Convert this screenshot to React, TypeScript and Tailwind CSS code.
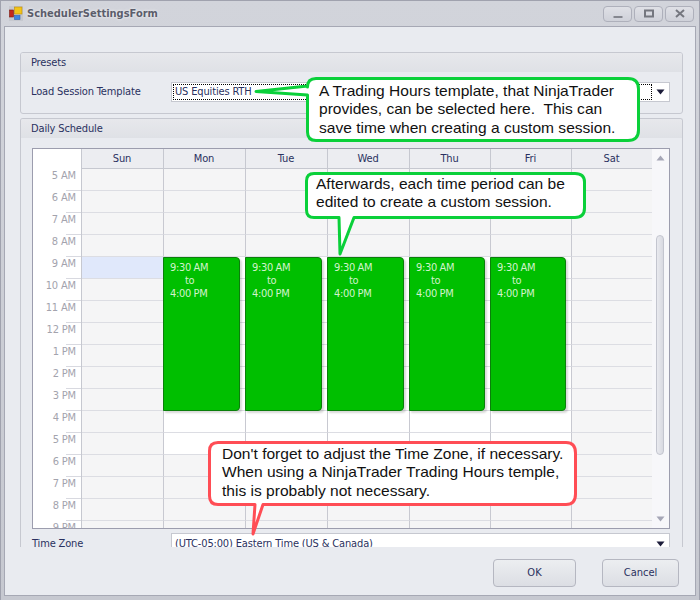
import React from "react";

const ui = "font-['DejaVu_Sans_Condensed','DejaVu_Sans',sans-serif] tracking-[-0.15px]";
const hours = ["5 AM","6 AM","7 AM","8 AM","9 AM","10 AM","11 AM","12 PM","1 PM","2 PM","3 PM","4 PM","5 PM","6 PM","7 PM","8 PM","9 PM"];
const days = [
  { n: "Sun", w: "w-[82px]" },
  { n: "Mon", w: "w-[82px]" },
  { n: "Tue", w: "w-[82px]" },
  { n: "Wed", w: "w-[82px]" },
  { n: "Thu", w: "w-[81px]" },
  { n: "Fri", w: "w-[81px]" },
  { n: "Sat", w: "w-[80px]" },
];
const events = [
  "left-[130px] w-[77px]",
  "left-[212px] w-[77px]",
  "left-[294px] w-[77px]",
  "left-[376px] w-[76px]",
  "left-[457px] w-[76px]",
];

function Arrow({ up = false, c = "#1c1c3a" }: { up?: boolean; c?: string }) {
  return (
    <svg width="9" height="6" viewBox="0 0 9 6" className={up ? "rotate-180" : ""}>
      <path d="M0.5 0.5H8.5L4.5 5.5Z" fill={c} />
    </svg>
  );
}

function Group({ title, h, children }: { title: string; h: string; children: React.ReactNode }) {
  return (
    <section className={`${h} rounded-t-[3px] border-x border-t border-[#c6c8d0] overflow-hidden`}>
      <div className="h-[19px] pl-[10px] pt-[1px] flex items-center bg-gradient-to-b from-[#e7e8ec] to-[#dfe1e6] text-[#2a3160] text-[11px]">{title}</div>
      {children}
    </section>
  );
}

function Calendar() {
  return (
    <div className="ml-[11px] mt-[10px] w-[638px] h-[381px] border border-[#9c9dae] bg-white flex overflow-hidden">
      <div className="relative w-[619px] h-[379px] overflow-hidden">
        <div className="flex h-[20px]">
          <div className="w-[49px] border-r border-[#c6c8d0]" />
          {days.map((d) => (
            <div key={d.n} className={`${d.w} border-r border-b border-[#c6c8d0] bg-[#ecedf1] text-[#2a3160] text-[11px] pt-[1px] pr-[1px] flex items-center justify-center last:border-r-0`}>
              {d.n}
            </div>
          ))}
        </div>
        {hours.map((h, r) => (
          <div key={h} className="flex h-[22px]">
            <div className="relative w-[49px] border-r border-[#c6c8d0] text-right pr-[5px] text-[#a3a3ad] text-[11px] leading-[13px]">
              {h}
              <span className="absolute left-[33px] right-0 bottom-0 h-px bg-[#d8d9e0]" />
            </div>
            {days.map((d, i) => {
              const work = i >= 1 && i <= 5 && r >= 4 && r <= 12;
              const sel = i === 0 && r === 4;
              return (
                <div
                  key={d.n}
                  className={`${d.w} border-r border-b border-b-[#dcdde3] border-r-[#c8c9d1] last:border-r-0 ${sel ? "bg-[#e0e8fb]" : work ? "bg-white" : "bg-[#f5f5f6]"}`}
                />
              );
            })}
          </div>
        ))}
        {events.map((e) => (
          <div key={e} className={`absolute top-[108px] h-[154px] ${e} bg-[#00bf00] border border-[#0b7f0b] rounded-r-[4px] shadow-[2px_2px_2px_rgba(0,0,0,0.15)] text-[#d2f2cc] text-[11px] tracking-[-0.35px] leading-[13px] pl-[6px] pt-[3px]`}>
            <div>9:30 AM</div>
            <div className="pl-[15px]">to</div>
            <div>4:00 PM</div>
          </div>
        ))}
      </div>
      <div className="relative w-[17px] h-[379px] bg-[#f7f7fa] flex flex-col items-center justify-between py-[6px]">
        <Arrow up c="#a5a6b6" />
        <div className="absolute left-[4px] top-[86px] w-[8px] h-[220px] rounded-full border border-[#c3c5cf] bg-gradient-to-r from-[#e9eaef] to-[#d8d9e1]" />
        <Arrow c="#a5a6b6" />
      </div>
    </div>
  );
}

function Callout({ pos, stroke, path, text, children }: { pos: string; stroke: string; path: string; text: string; children: React.ReactNode }) {
  return (
    <div className={`absolute ${pos}`}>
      <svg className="absolute inset-0 w-full h-full overflow-visible" fill="none">
        <path d={path} fill="#fff" stroke={stroke} strokeWidth="3" strokeLinejoin="round" />
      </svg>
      <div className={`relative font-['Liberation_Sans',Arial,sans-serif] tracking-normal text-[#111] text-[15.55px] leading-[18.3px] whitespace-pre ${text}`}>{children}</div>
    </div>
  );
}

function WinBtn({ children }: { children: React.ReactNode }) {
  return (
    <div className="w-[29px] h-[16px] rounded-[4px] border border-[#aeb0bb] bg-gradient-to-b from-[#dfe0e6] to-[#cfd1d9] flex items-center justify-center">
      {children}
    </div>
  );
}

export default function App() {
  return (
    <div className={`relative w-[700px] h-[600px] overflow-hidden flex flex-col bg-gradient-to-b from-[#d2d4db] to-[#c6c8d0] border-x border-t border-[#a0a2ae] ${ui}`}>
      <header className="h-[25px] flex items-center pl-[8px] pr-[5px] shrink-0">
        <svg width="14" height="15" viewBox="0 0 14 15" className="shrink-0">
          <rect x="0" y="0" width="14" height="15" fill="#c6c8cf" />
          <rect x="0.5" y="4" width="4" height="7" fill="#c4281c" stroke="#7a1c14" strokeWidth="0.6" />
          <rect x="5.5" y="1" width="7.5" height="7" fill="#f2c418" stroke="#b98a10" strokeWidth="0.6" />
          <rect x="5.5" y="9.5" width="5.5" height="4" fill="#3f86e0" stroke="#2c62b0" strokeWidth="0.6" />
        </svg>
        <div className="ml-[4px] pt-[1px] font-bold text-[11px] tracking-normal text-[#5b5d6b] [text-shadow:0_0_3px_rgba(255,255,255,0.9)]">SchedulerSettingsForm</div>
        <div className="ml-auto flex gap-[2px]">
          <WinBtn>
            <svg width="10" height="10" viewBox="0 0 10 10"><rect x="0.5" y="7" width="9" height="2" fill="#85878f" /></svg>
          </WinBtn>
          <WinBtn>
            <svg width="10" height="10" viewBox="0 0 10 10"><rect x="1" y="1.5" width="8" height="6" fill="none" stroke="#75777f" strokeWidth="2" /></svg>
          </WinBtn>
          <WinBtn>
            <svg width="10" height="10" viewBox="0 0 10 10"><path d="M1 1L9 8M9 1L1 8" stroke="#75777f" strokeWidth="2" /></svg>
          </WinBtn>
        </div>
      </header>

      <main className="ml-[3px] mr-[3px] mb-[4px] flex-1 border border-[#a6a8b4] bg-[#e9ebf0] pl-[15px] pr-[12px] pt-[25px]">
        <Group title="Presets" h="h-[62px] border-b rounded-b-[3px]">
          <div className="mt-[10px] pl-[10px] flex items-center">
            <div className="w-[140px] pt-[1px] text-[#2a3160] text-[11px]">Load Session Template</div>
            <div className="w-[499px] h-[20px] bg-white border border-[#c6c8d0] flex items-center pl-[1px]">
              <div className="w-[479px] h-[16px] border border-dotted border-black flex items-center pl-[1px] pt-[1px] text-[#2a3160] text-[11px]">US Equities RTH</div>
              <div className="flex-1 flex justify-center"><Arrow /></div>
            </div>
          </div>
        </Group>
        <div className="h-[4px]" />
        <Group title="Daily Schedule" h="h-[429px]">
          <Calendar />
          <div className="mt-[4px] pl-[11px] flex items-start">
            <div className="w-[139px] text-[#2a3160] text-[11px] pt-[3px]">Time Zone</div>
            <div className="w-[499px] h-[20px] bg-white border border-[#c6c8d0] flex items-center pl-[3px] pt-[2px]">
              <div className="flex-1 text-[#2a3160] text-[11px]">(UTC-05:00) Eastern Time (US &amp; Canada)</div>
              <div className="w-[17px] flex justify-center"><Arrow /></div>
            </div>
          </div>
        </Group>
        <div className="mt-[12px] flex justify-end gap-[26px] pr-[4px] text-[#2a3160] text-[11px] tracking-normal">
          <button className="w-[83px] h-[28px] rounded-[4px] border border-[#b5b7c1] bg-gradient-to-b from-[#eceef1] to-[#dcdee4]">OK</button>
          <button className="w-[77px] h-[28px] rounded-[4px] border border-[#b5b7c1] bg-gradient-to-b from-[#eceef1] to-[#dcdee4]">Cancel</button>
        </div>
      </main>

      <Callout
        pos="left-[305px] top-[76px] w-[334px] h-[65px]"
        stroke="#0ad03a"
        path="M10 1.5H322Q332.5 1.5 332.5 12V53Q332.5 63.5 322 63.5H10Q1.5 63.5 1.5 55V18L-50 14.5L1.5 9V10Q1.5 1.5 10 1.5Z"
        text="pl-[13px] pt-[5px]"
      >
        {"A Trading Hours template, that NinjaTrader\nprovides, can be selected here.  This can\nsave time when creating a custom session."}
      </Callout>
      <Callout
        pos="left-[304px] top-[171px] w-[281px] h-[47px]"
        stroke="#0ad03a"
        path="M9 1.5H270Q279.5 1.5 279.5 10V36Q279.5 45.5 270 45.5H49L35 82L34 45.5H9Q1.5 45.5 1.5 38V9Q1.5 1.5 9 1.5Z"
        text="pl-[11px] pt-[3px]"
      >
        {"Afterwards, each time period can be\nedited to create a custom session."}
      </Callout>
      <Callout
        pos="left-[207px] top-[440px] w-[369px] h-[65px]"
        stroke="#ff4d55"
        path="M10 1.5H358Q367.5 1.5 367.5 12V53Q367.5 63.5 358 63.5H55L45 93L47 63.5H10Q1.5 63.5 1.5 55V10Q1.5 1.5 10 1.5Z"
        text="pl-[14px] pt-[4px]"
      >
        {"Don't forget to adjust the Time Zone, if necessary.\nWhen using a NinjaTrader Trading Hours temple,\nthis is probably not necessary."}
      </Callout>
    </div>
  );
}
